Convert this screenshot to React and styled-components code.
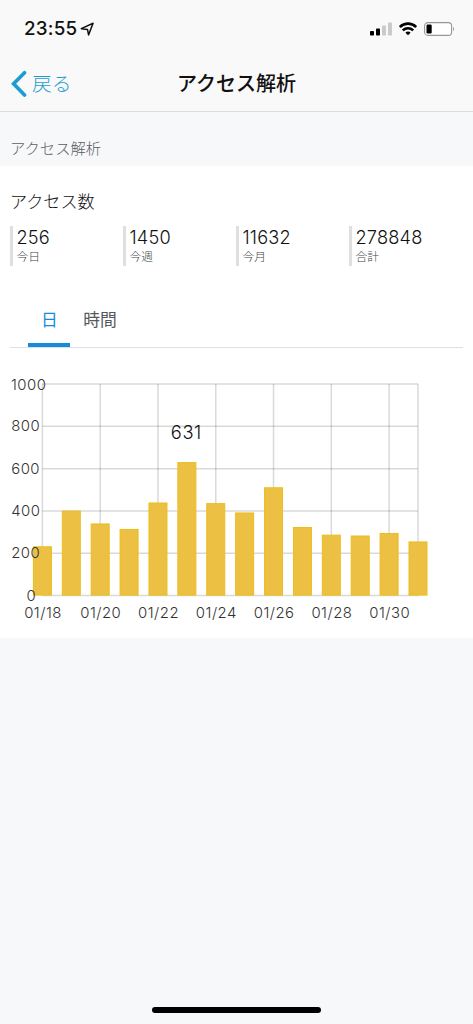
import React from 'react'
import styled, { createGlobalStyle } from 'styled-components'

const GlobalStyle = createGlobalStyle`
    * {
        box-sizing: border-box;
    }

    body {
        margin: 0;
        background-color: #F6F8FA;
        font-family: Inter, "Noto Sans CJK JP", sans-serif;
    }
`

const Screen = styled.div`
    width: 473px;
    height: 1024px;
    display: flex;
    flex-direction: column;
    overflow: hidden;
    background-color: #F6F8FA;
`

const TopArea = styled.header`
    height: 112px;
    flex: none;
    background-color: #F9F9F9;
    border-bottom: 1px solid #DCDDDF;
`

const StatusBar = styled.div`
    height: 56px;
    display: flex;
    align-items: center;
    justify-content: space-between;
    padding: 2px 18px 0 24px;
`

const Clock = styled.div`
    display: flex;
    align-items: center;
    gap: 3px;
    font-size: 18.8px;
    font-weight: 500;
    line-height: 24px;
    letter-spacing: 0.2px;
    color: #111111;
`

const StatusIcons = styled.div`
    display: flex;
    align-items: center;
    gap: 7px;
`

const NavBar = styled.div`
    height: 55px;
    display: grid;
    grid-template-columns: 1fr auto 1fr;
    align-items: center;
    padding: 0 11px;
`

const BackButton = styled.div`
    display: flex;
    align-items: center;
    gap: 5px;
    font-size: 19.7px;
    font-weight: 300;
    line-height: 28px;
    color: #1B9DD0;
`

const Title = styled.h1`
    margin: 0;
    font-size: 20px;
    font-weight: 500;
    line-height: 28px;
    color: #111111;
`

const SectionLabel = styled.div`
    height: 54px;
    flex: none;
    padding: 26px 10px 0;
    font-size: 15.3px;
    font-weight: 300;
    line-height: 22px;
    color: #5D5E60;
`

const Card = styled.main`
    height: 472px;
    flex: none;
    padding: 24px 10px 0;
    background-color: #FFFFFF;
`

const CardTitle = styled.h2`
    margin: 0;
    font-size: 17.1px;
    font-weight: 300;
    line-height: 24px;
    color: #111111;
`

const Stats = styled.div`
    display: grid;
    grid-template-columns: repeat(4, 113px);
    margin-top: 12px;
`

const Stat = styled.div`
    height: 40px;
    padding-left: 3.5px;
    border-left: 3px solid #DFDFDF;
`

const StatValue = styled.div`
    font-size: 18.2px;
    font-weight: 350;
    line-height: 23px;
    letter-spacing: 0.2px;
    color: #111111;
`

const StatLabel = styled.div`
    font-size: 11.8px;
    font-weight: 300;
    line-height: 16px;
    color: #444444;
`

const Tabs = styled.div`
    height: 50px;
    display: flex;
    margin-top: 32px;
    padding-left: 18px;
    border-bottom: 1px solid #DCDFE5;
`

const Tab = styled.div`
    height: 49px;
    padding: 10px 12.5px 0 13px;
    font-size: 16.8px;
    font-weight: 400;
    line-height: 24px;
    color: ${props => props.$active ? '#178BDB' : '#55595E'};
    border-bottom: ${props => props.$active ? '4px solid #178BDB' : 'none'};
`

const ChartSvg = styled.svg`
    display: block;
    margin-top: 16px;
    font-family: Inter, sans-serif;
`

const AxisText = styled.text`
    font-size: 14.9px;
    font-weight: 300;
    letter-spacing: 0.5px;
    fill: #333333;
`

const PeakText = styled.text`
    font-size: 18.3px;
    font-weight: 350;
    letter-spacing: 0.6px;
    fill: #111111;
`

const HomeIndicator = styled.div`
    width: 169px;
    height: 6px;
    margin: auto auto 11px;
    border-radius: 3px;
    background-color: #000000;
`

const stats = [
    { value: '256', label: '今日' },
    { value: '1450', label: '今週' },
    { value: '11632', label: '今月' },
    { value: '278848', label: '合計' },
]

const days = [
    { date: '01/18', count: 233 },
    { date: '01/19', count: 402 },
    { date: '01/20', count: 341 },
    { date: '01/21', count: 315 },
    { date: '01/22', count: 440 },
    { date: '01/23', count: 631 },
    { date: '01/24', count: 437 },
    { date: '01/25', count: 393 },
    { date: '01/26', count: 512 },
    { date: '01/27', count: 324 },
    { date: '01/28', count: 288 },
    { date: '01/29', count: 284 },
    { date: '01/30', count: 296 },
    { date: '01/31', count: 256 },
]

// CHART:
const LEFT = 32.4
const RIGHT = 408
const TOP = 20
const BOTTOM = 231.6
const STEP = (RIGHT - LEFT) / (days.length - 1)

const xOf = index => LEFT + index * STEP
const yOf = count => BOTTOM - (count / 1000) * (BOTTOM - TOP)

function Chart() {

    const peak = days.findIndex(day => day.count === 631)

    return (
        <ChartSvg width="453" height="270">
            <g stroke="#000000" strokeOpacity="0.15" strokeWidth="1.5">
                {[0, 200, 400, 600, 800, 1000].map(v => (
                    <line key={v} x1={LEFT} x2={RIGHT} y1={yOf(v)} y2={yOf(v)} />
                ))}
                {days.map((day, i) => i % 2 === 0 && (
                    <line key={day.date} x1={xOf(i)} x2={xOf(i)} y1={TOP} y2={BOTTOM} />
                ))}
                <line x1={RIGHT} x2={RIGHT} y1={TOP} y2={BOTTOM} />
            </g>

            {days.map((day, i) => (
                <rect
                    key={day.date}
                    x={xOf(i) - 9}
                    y={yOf(day.count) + 0.5}
                    width="18"
                    height={BOTTOM - yOf(day.count) - 1}
                    fill="#ECC143"
                    stroke="#EDBD1C"
                />
            ))}

            {[200, 400, 600, 800].map(v => (
                <AxisText key={v} x="1.2" y={yOf(v) + 5}>{v}</AxisText>
            ))}
            <AxisText x="16.5" y={yOf(0) + 5}>0</AxisText>
            <AxisText x="1" y={TOP + 5.7}>1000</AxisText>

            {days.map((day, i) => i % 2 === 0 && (
                <AxisText key={day.date} x={xOf(i) + 0.6} y="254" textAnchor="middle">{day.date}</AxisText>
            ))}
            <PeakText x={xOf(peak) - 0.5} y="75" textAnchor="middle">631</PeakText>
        </ChartSvg>
    )

}

function App() {
    return (
        <>
        <GlobalStyle />
        <Screen>
            <TopArea>
                <StatusBar>
                    <Clock>
                        23:55
                        <svg width="15" height="15" viewBox="0 0 14 14">
                            <path d="M1.2 6.2 12.2 1.2 8 12 7 6.9Z" fill="none" stroke="#111111" strokeWidth="1.4" strokeLinejoin="round" />
                        </svg>
                    </Clock>
                    <StatusIcons>
                        <svg width="22" height="14" viewBox="0 0 22 14">
                            <rect x="0" y="9" width="4" height="4.5" rx="0.8" fill="#000000" />
                            <rect x="6" y="6.5" width="4" height="7" rx="0.8" fill="#000000" />
                            <rect x="12" y="3.5" width="4" height="10" rx="0.8" fill="#CACACA" />
                            <rect x="18" y="0.5" width="4" height="13" rx="0.8" fill="#CACACA" />
                        </svg>
                        <svg width="18" height="14" viewBox="0 0 18 14">
                            <path d="M0.8 5A11.8 11.8 0 0 1 17.2 5" fill="none" stroke="#000000" strokeWidth="2.7" />
                            <path d="M3.8 8.4A7.4 7.4 0 0 1 14.2 8.4" fill="none" stroke="#000000" strokeWidth="2.5" />
                            <path d="M6.4 10.7A4 4 0 0 1 11.6 10.7L9 13.3Z" fill="#000000" />
                        </svg>
                        <svg width="31" height="14" viewBox="0 0 31 14">
                            <rect x="0.6" y="0.6" width="27" height="12.8" rx="3.4" fill="#FFFFFF" stroke="#969696" strokeWidth="1.1" />
                            <rect x="2.5" y="2.5" width="5.2" height="9" rx="1.2" fill="#000000" />
                            <path d="M29 4.8Q31 7 29 9.2Z" fill="#969696" />
                        </svg>
                    </StatusIcons>
                </StatusBar>
                <NavBar>
                    <BackButton>
                        <svg width="16" height="28" viewBox="0 0 16 28">
                            <path d="M13.5 2.7 2.6 13.8 13.5 25" fill="none" stroke="#1B9DD0" strokeWidth="3.7" strokeLinecap="round" strokeLinejoin="miter" />
                        </svg>
                        戻る
                    </BackButton>
                    <Title>アクセス解析</Title>
                </NavBar>
            </TopArea>

            <SectionLabel>アクセス解析</SectionLabel>

            <Card>
                <CardTitle>アクセス数</CardTitle>
                <Stats>
                    {stats.map(stat => (
                        <Stat key={stat.label}>
                            <StatValue>{stat.value}</StatValue>
                            <StatLabel>{stat.label}</StatLabel>
                        </Stat>
                    ))}
                </Stats>
                <Tabs>
                    <Tab $active>日</Tab>
                    <Tab>時間</Tab>
                </Tabs>
                <Chart />
            </Card>

            <HomeIndicator />
        </Screen>
        </>
    )
}

export default App
